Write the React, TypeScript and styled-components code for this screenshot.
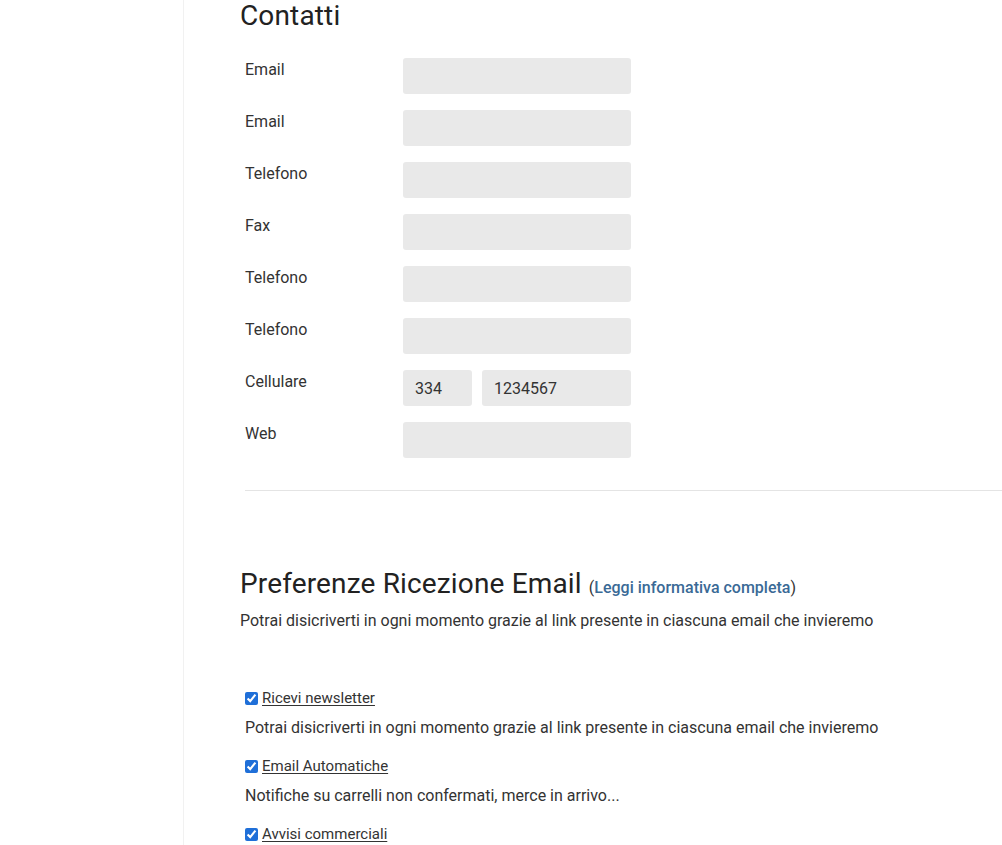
import React from 'react';
import styled, { createGlobalStyle } from 'styled-components';

const GlobalStyle = createGlobalStyle`
  html, body {
    margin: 0;
    padding: 0;
    background: #fff;
    font-family: Roboto, 'Liberation Sans', Arial, sans-serif;
    color: #333;
  }
`;

const Page = styled.div`
  display: flex;
  min-height: 845px;
  overflow: hidden;
`;

const Sidebar = styled.aside`
  width: 183px;
  flex-shrink: 0;
  border-right: 1px solid #f1f1f1;
`;

const Main = styled.main`
  flex: 1;
  padding-left: 56px;
`;

const SectionTitle = styled.h2`
  margin: 0;
  font-size: 28px;
  line-height: 32px;
  font-weight: 400;
  letter-spacing: 0.15px;
  color: #222;
`;

const Form = styled.div`
  display: flex;
  flex-direction: column;
  gap: 16px;
  padding-left: 5px;
  margin-top: 26px;
`;

const Row = styled.div`
  display: flex;
  align-items: flex-start;
`;

const Label = styled.label`
  width: 158px;
  font-size: 16px;
  line-height: 24px;
  color: #333;
`;

const Inputs = styled.div`
  display: flex;
  gap: 10px;
  width: 228px;
`;

const Field = styled.input<{ $w?: number }>`
  box-sizing: border-box;
  width: ${(p) => (p.$w ? `${p.$w}px` : '100%')};
  flex: ${(p) => (p.$w ? 'none' : '1')};
  height: 36px;
  border: none;
  border-radius: 3px;
  background: #e9e9e9;
  padding: 0 12px;
  font-family: inherit;
  font-size: 16px;
  color: #333;
  outline: none;
`;

const Divider = styled.hr`
  border: none;
  border-top: 1px solid #e4e4e4;
  margin: 32px 0 77px 5px;
`;

const LinkWrap = styled.span`
  font-size: 16px;
  letter-spacing: 0;
  color: #333;
`;

const InfoLink = styled.a`
  color: #3a6a96;
  font-weight: 500;
  text-decoration: none;
`;

const Intro = styled.p`
  margin: 5px 0 55px;
  font-size: 16px;
  line-height: 24px;
  color: #333;
`;

const Prefs = styled.div`
  display: flex;
  flex-direction: column;
  gap: 16px;
  padding-left: 5px;
`;

const PrefItem = styled.div`
  display: flex;
  flex-direction: column;
  gap: 8px;
`;

const CheckLine = styled.label`
  display: flex;
  align-items: center;
  gap: 4px;
  font-size: 15px;
  line-height: 20px;
  color: #333;

  input {
    margin: 0;
    width: 13px;
    height: 13px;
    accent-color: #1f6fd8;
  }

  span {
    text-decoration: underline;
    text-underline-offset: 2px;
  }
`;

const PrefNote = styled.div`
  font-size: 16px;
  line-height: 24px;
  color: #333;
`;

const contacts: { label: string; values?: [string, string] }[] = [
  { label: 'Email' },
  { label: 'Email' },
  { label: 'Telefono' },
  { label: 'Fax' },
  { label: 'Telefono' },
  { label: 'Telefono' },
  { label: 'Cellulare', values: ['334', '1234567'] },
  { label: 'Web' },
];

const prefs = [
  {
    title: 'Ricevi newsletter',
    note: 'Potrai disicriverti in ogni momento grazie al link presente in ciascuna email che invieremo',
  },
  {
    title: 'Email Automatiche',
    note: 'Notifiche su carrelli non confermati, merce in arrivo...',
  },
  { title: 'Avvisi commerciali', note: '' },
];

export default function App() {
  return (
    <>
      <GlobalStyle />
      <Page>
        <Sidebar />
        <Main>
          <SectionTitle>Contatti</SectionTitle>
          <Form>
            {contacts.map((c, i) => (
              <Row key={i}>
                <Label>{c.label}</Label>
                <Inputs>
                  {c.values ? (
                    <>
                      <Field $w={69} defaultValue={c.values[0]} />
                      <Field defaultValue={c.values[1]} />
                    </>
                  ) : (
                    <Field />
                  )}
                </Inputs>
              </Row>
            ))}
          </Form>
          <Divider />
          <SectionTitle>
            Preferenze Ricezione Email{' '}
            <LinkWrap>
              (<InfoLink href="#">Leggi informativa completa</InfoLink>)
            </LinkWrap>
          </SectionTitle>
          <Intro>
            Potrai disicriverti in ogni momento grazie al link presente in ciascuna email che invieremo
          </Intro>
          <Prefs>
            {prefs.map((p) => (
              <PrefItem key={p.title}>
                <CheckLine>
                  <input type="checkbox" defaultChecked />
                  <span>{p.title}</span>
                </CheckLine>
                {p.note && <PrefNote>{p.note}</PrefNote>}
              </PrefItem>
            ))}
          </Prefs>
        </Main>
      </Page>
    </>
  );
}
